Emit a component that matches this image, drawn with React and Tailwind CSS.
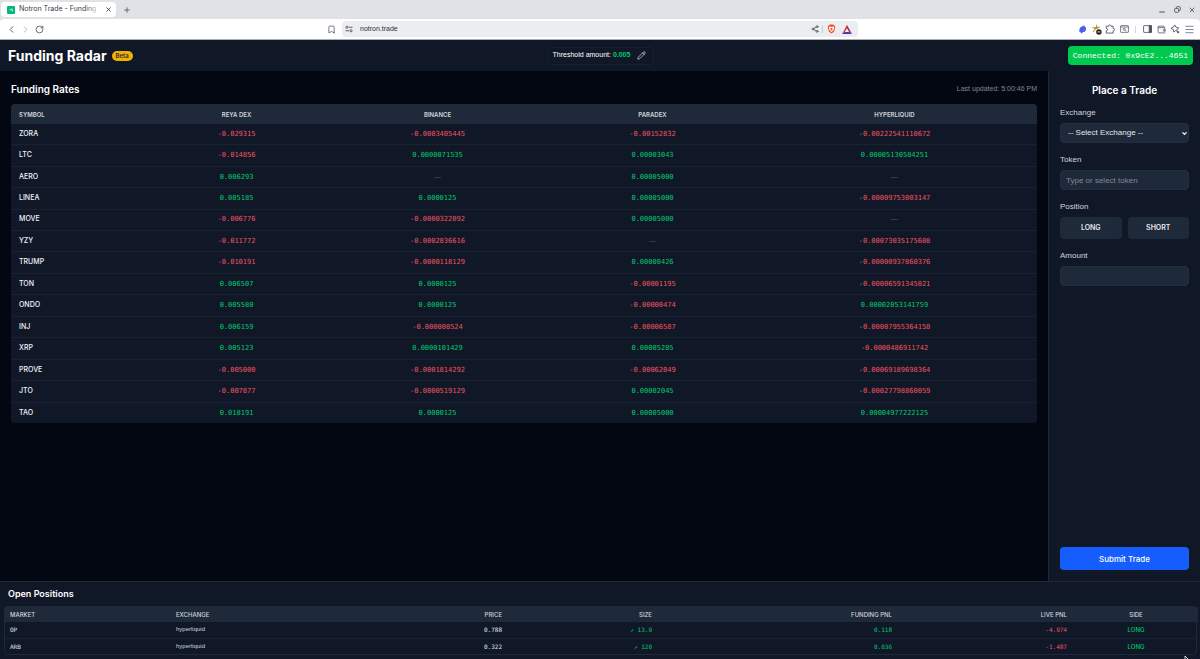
import React from "react";
import {
  Bookmark, ChevronDown, ChevronLeft, ChevronRight, Menu, Minus, Pencil, Plus,
  RotateCw, Share2, Wallet, X,
} from "lucide-react";

const RATES = [
  ["ZORA", "-0.029315", "-0.0003405445", "-0.00152832", "-0.00222541110672"],
  ["LTC", "-0.014856", "0.0000071535", "0.00003043", "0.00005130584251"],
  ["AERO", "0.006293", "—", "0.00005000", "—"],
  ["LINEA", "0.005185", "0.0000125", "0.00005000", "-0.00009753003147"],
  ["MOVE", "-0.006776", "-0.0000322092", "0.00005000", "—"],
  ["YZY", "-0.011772", "-0.0002836616", "—", "-0.00073035175608"],
  ["TRUMP", "-0.010191", "-0.0000118129", "0.00000426", "-0.00000937860376"],
  ["TON", "0.006507", "0.0000125", "-0.00001195", "-0.00006591345021"],
  ["ONDO", "0.005580", "0.0000125", "-0.00000474", "0.00002053141759"],
  ["INJ", "0.006159", "-0.000008524", "-0.00006587", "-0.00007955364158"],
  ["XRP", "0.005123", "0.0000101429", "0.00005285", "-0.0000486911742"],
  ["PROVE", "-0.005000", "-0.0001814292", "-0.00062049", "-0.00069189698364"],
  ["JTO", "-0.007877", "-0.0000519129", "0.00002045", "-0.00027798860059"],
  ["TAO", "0.018191", "0.0000125", "0.00005000", "0.00004977222125"],
];

const POSITIONS = [
  { market: "OP", exchange: "hyperliquid", price: "0.788", size: "13.9", funding: "0.118", live: "-4.974", side: "LONG" },
  { market: "ARB", exchange: "hyperliquid", price: "0.322", size: "120", funding: "0.036", live: "-1.487", side: "LONG" },
];

const MONO = "font-['DejaVu_Sans_Mono',monospace]";
const INTER = "font-['Inter',sans-serif]";

function toneOf(value) {
  if (value === "—") return "text-[#4a5565]";
  return value.startsWith("-") ? "text-[#f0525f]" : "text-[#05c86c]";
}

function IconButton({ label, children }) {
  return (
    <button type="button" aria-label={label} className="flex h-4 w-[14px] items-center justify-center">
      {children}
    </button>
  );
}

function TabStrip() {
  return (
    <div className="flex h-[19px] items-center justify-between bg-[#e1e2e7] pl-px pr-px">
      <div className="flex items-center gap-1">
        <div className="flex h-[15px] w-[115px] items-center gap-1 rounded bg-white pl-[6px] pr-1 text-[#3b3d45]">
          <svg viewBox="0 0 8 8" className="size-2 shrink-0">
            <rect width="8" height="8" rx="1" fill="#05b87a" />
            <path d="M2.5 3.2 4 4.6V3h1.4v2.6" fill="none" stroke="#b9f3dc" strokeWidth="0.8" />
          </svg>
          <span className={`relative flex-1 overflow-hidden whitespace-nowrap text-[7px] ${INTER}`}>
            Notron Trade - Funding
            <span className="absolute inset-y-0 right-0 w-4 bg-linear-to-r from-transparent to-white" />
          </span>
          <button type="button" aria-label="Close tab"><X className="size-[7px]" strokeWidth={3} /></button>
        </div>
        <button type="button" aria-label="New tab" className="flex w-[14px] justify-center text-[#55575f]">
          <Plus className="size-2" strokeWidth={2.5} />
        </button>
      </div>
      <div className="flex gap-px text-[#4c4e56]">
        <IconButton label="Minimize"><Minus className="mt-1 size-2" strokeWidth={3} /></IconButton>
        <IconButton label="Restore">
          <svg viewBox="0 0 16 16" className="size-[7px]" fill="none" stroke="currentColor" strokeWidth="2">
            <rect x="1.5" y="5.5" width="9" height="9" rx="2" />
            <path d="M5.5 5.500V3.500a2 2 0 0 1 2-2h5a2 2 0 0 1 2 2v5a2 2 0 0 1-2 2h-2" />
          </svg>
        </IconButton>
        <IconButton label="Close window"><X className="size-2" strokeWidth={2.5} /></IconButton>
      </div>
    </div>
  );
}

function Toolbar() {
  return (
    <div className="bg-[#e1e2e7]">
      <div className="flex h-[21px] items-center rounded-t border-b border-[#a9adb8] bg-white text-[#50535c]">
        <div className="flex flex-1 items-center justify-between px-1">
          <div className="flex">
            <IconButton label="Back"><ChevronLeft className="size-[11px]" strokeWidth={2} /></IconButton>
            <IconButton label="Forward"><ChevronRight className="size-[11px] text-[#b4b6bd]" strokeWidth={2} /></IconButton>
            <IconButton label="Reload"><RotateCw className="size-[9px]" strokeWidth={2.2} /></IconButton>
          </div>
          <IconButton label="Bookmark"><Bookmark className="size-[9px]" strokeWidth={2} /></IconButton>
        </div>
        <div className="flex h-4 w-[43%] items-center rounded bg-[#ecedf1] pr-1">
          <IconButton label="Site settings">
            <svg viewBox="0 0 16 16" className="size-[8px]" fill="none" stroke="currentColor" strokeWidth="1.8">
              <circle cx="4" cy="4.500" r="2.200" />
              <path d="M8 4.500h7M1 11.500h7" />
              <circle cx="12" cy="11.500" r="2.200" />
            </svg>
          </IconButton>
          <input aria-label="Address" defaultValue="notron.trade" className="min-w-0 flex-1 bg-transparent pl-1 text-[7px] text-[#2e3038] outline-none" />
          <IconButton label="Share"><Share2 className="size-2" strokeWidth={2.4} /></IconButton>
          <span className="h-[7px] w-px bg-[#c6c8cf]" />
          <div className="flex w-[31px] justify-between pl-px">
            <IconButton label="Shields">
              <svg viewBox="0 0 20 22" className="h-[10px] w-[9px]">
                <path d="M6 1h8l2 2 2.500 2-.8 2.500.5 1.500-2.700 8L10 21l-5.500-4L1.800 9l.5-1.500L1.500 5 4 3z" fill="#f4511e" />
                <path d="M5 5.500 10 6.500l5-1 1.200 3-2 4.500-4.200 5-4.200-5-2-4.500z" fill="#fff" />
                <path d="M7.500 8.500h5l-1 4.500L10 15l-1.500-2z" fill="#f4511e" />
              </svg>
            </IconButton>
            <IconButton label="Rewards">
              <svg viewBox="0 0 20 18" className="h-[9px] w-[10px]">
                <path d="M10 0 6.500 6.500 10 8z" fill="#ff4724" />
                <path d="M10 0 0 18l6-3.500L10 7z" fill="#e0433c" />
                <path d="M10 0v7l4 7.500 6 3.500z" fill="#9a2a80" />
                <path d="M0 18h20l-6-4H6z" fill="#5b2fa0" />
                <path d="m10 7.500 3.600 6.200H6.400z" fill="#fff" />
              </svg>
            </IconButton>
          </div>
        </div>
        <div className="flex flex-1 items-center justify-end px-1">
          <IconButton label="Wallet extension">
            <svg viewBox="0 0 16 16" className="size-[9px]">
              <path d="M8 2c2-2 4-1 4 1 2 0 3 2 2 4 1 1 0 3-1.500 3.500C12 13 10 13 9 12c-1 3-4 3-4.500.5C2 12.500 1 10 3 8c-1-3 2-5 5-6z" fill="#4f5df0" />
              <path d="M4 13c1 2 3 2 4 1" fill="none" stroke="#8b94ff" strokeWidth="1.500" />
            </svg>
          </IconButton>
          <IconButton label="Star extension">
            <svg viewBox="0 0 16 16" className="size-[11px]">
              <path d="M8 1v4M2 5l4 1M3 12l3-5M13 4 9 6" stroke="#c79a35" strokeWidth="1.500" />
              <path d="M5 5 9 3.500l2 2.500-5 2z" fill="#b08d3e" />
              <circle cx="11.500" cy="11.500" r="4" fill="#26262b" />
              <path d="M9.500 11.500h4" stroke="#fff" strokeWidth="1.200" />
            </svg>
          </IconButton>
          <IconButton label="Extensions">
            <svg viewBox="0 0 16 16" className="size-[10px]" fill="none" stroke="currentColor" strokeWidth="1.400" strokeLinejoin="round">
              <path d="M2 3.500h3.500a2 2 0 0 1 4 0H13V7a2 2 0 0 1 0 4v3.500H2V11a2 2 0 0 0 0-4z" />
            </svg>
          </IconButton>
          <IconButton label="Screenshot search">
            <svg viewBox="0 0 16 14" className="h-2 w-[9px]" fill="none" stroke="currentColor" strokeWidth="1.300">
              <rect x="1" y="1" width="14" height="12" rx="1" />
              <path d="M1 3.500h14" />
              <circle cx="7.500" cy="7.500" r="1.800" />
              <path d="m9 9 2.500 2.500" />
            </svg>
          </IconButton>
          <span className="mx-1 h-[7px] w-px bg-[#d7d8dd]" />
          <IconButton label="Side panel">
            <svg viewBox="0 0 16 14" className="h-2 w-[9px]" fill="none" stroke="currentColor" strokeWidth="1.500">
              <rect x="1" y="1" width="14" height="12" rx="1" />
              <path d="M11 1h4v12h-4z" fill="currentColor" />
            </svg>
          </IconButton>
          <IconButton label="Wallet"><Wallet className="size-[9px]" strokeWidth={2} /></IconButton>
          <IconButton label="Assistant">
            <svg viewBox="0 0 16 16" className="size-[10px]" fill="none" stroke="currentColor" strokeWidth="1.400" strokeLinejoin="round">
              <path d="M7.500 1.500 9.500 5l4.500 1.500-3 2 .5 3-3-1L6 13l-.5-4L1.500 7 5.500 5z" />
              <circle cx="13" cy="13" r="1.200" fill="currentColor" />
            </svg>
          </IconButton>
          <IconButton label="Menu"><Menu className="size-[11px] text-[#777a83]" strokeWidth={2} /></IconButton>
        </div>
      </div>
    </div>
  );
}

function Header() {
  return (
    <header className="flex h-[31px] items-center bg-[#101828] pl-2 pr-[7px]">
      <div className="flex flex-1 items-center gap-[5px]">
        <h1 className={`text-[14px] font-bold ${INTER}`}>Funding Radar</h1>
        <span className={`rounded-full bg-[#f0b100] px-1 py-[2px] text-[6px] leading-[6px] font-semibold text-[#1e2939] ${INTER}`}>Beta</span>
      </div>
      <div className="flex h-[18px] items-center gap-1 rounded-sm border border-[#162032] px-[5px] text-[7px]">
        <span className="text-white">Threshold amount: <span className="font-bold text-[#05c86c]">0.005</span></span>
        <IconButton label="Edit threshold"><Pencil className="size-[9px] text-[#d1d5dc]" strokeWidth={2} /></IconButton>
      </div>
      <div className="flex flex-1 justify-end">
        <button type="button" className="h-[19px] rounded-sm bg-[#00c950] px-[5px] font-['Liberation_Mono',monospace] text-[8px] text-white">
          Connected: 0x9cE2...4651
        </button>
      </div>
    </header>
  );
}

function FundingRates() {
  return (
    <main className="min-w-0 flex-1 px-[11px] py-[10px]">
      <div className="flex h-4 items-center justify-between">
        <h2 className={`text-[10px] font-semibold ${INTER}`}>Funding Rates</h2>
        <p className="text-[7px] text-[#7f8999]">Last updated: 5:00:46 PM</p>
      </div>
      <div className="mt-[7px] overflow-hidden rounded bg-[#101828]">
        <table className="h-[319px] w-full table-fixed">
          <colgroup>
            <col className="w-[140px]" />
            <col className="w-[171px]" />
            <col className="w-[231px]" />
            <col className="w-[199px]" />
            <col className="w-[285px]" />
          </colgroup>
          <thead className={`bg-[#1e2939] text-[6px] text-[#d1d5dc] ${INTER}`}>
            <tr className="h-5">
              <th className="pl-2 text-left font-semibold">SYMBOL</th>
              <th className="font-semibold">REYA DEX</th>
              <th className="font-semibold">BINANCE</th>
              <th className="font-semibold">PARADEX</th>
              <th className="font-semibold">HYPERLIQUID</th>
            </tr>
          </thead>
          <tbody>
            {RATES.map(([symbol, ...values]) => (
              <tr key={symbol} className="border-b border-[#182233] last:border-b-0">
                <th scope="row" className={`pl-2 text-left text-[7px] font-medium text-[#f3f4f6] ${INTER}`}>{symbol}</th>
                {values.map((value, i) => (
                  <td key={i} className={`text-center text-[7px] ${value === "—" ? "" : MONO} ${toneOf(value)}`}>{value}</td>
                ))}
              </tr>
            ))}
          </tbody>
        </table>
      </div>
    </main>
  );
}

function TradePanel() {
  const label = "block text-[8px] leading-[10px] text-[#d1d5dc]";
  const field = "block h-5 w-full rounded border border-[#232f40] bg-[#1e2939] text-[8px] outline-none";
  const side = `h-[22px] flex-1 rounded-sm bg-[#1e2939] text-[7px] font-semibold text-[#e5e7eb] ${INTER}`;
  return (
    <aside className="w-[152px] border-l border-[#1e2939] bg-[#101828]">
      <form className="flex h-full flex-col px-[11px] pt-[13px] pb-[11px]" onSubmit={(e) => e.preventDefault()}>
        <h2 className={`text-center text-[10px] leading-3 font-semibold ${INTER}`}>Place a Trade</h2>
        <div className="mt-3">
          <label htmlFor="exchange" className={label}>Exchange</label>
          <div className="relative mt-[5px]">
            <select id="exchange" className={`${field} appearance-none px-[7px] text-[#e5e7eb]`}>
              <option>-- Select Exchange --</option>
            </select>
            <ChevronDown className="pointer-events-none absolute top-[7px] right-px size-[7px]" strokeWidth={4} />
          </div>
        </div>
        <div className="mt-3">
          <label htmlFor="token" className={label}>Token</label>
          <input id="token" placeholder="Type or select token" className={`${field} mt-[5px] px-[5px] placeholder:text-[#7f8999]`} />
        </div>
        <div className="mt-3" role="group" aria-labelledby="position">
          <span id="position" className={label}>Position</span>
          <div className="mt-[5px] flex gap-[6px]">
            <button type="button" className={side}>LONG</button>
            <button type="button" className={side}>SHORT</button>
          </div>
        </div>
        <div className="mt-3">
          <label htmlFor="amount" className={label}>Amount</label>
          <input id="amount" className={`${field} mt-[5px] px-[5px]`} />
        </div>
        <button type="submit" className={`mt-auto h-[23px] rounded bg-[#155dfc] text-[8px] font-medium ${INTER}`}>Submit Trade</button>
      </form>
    </aside>
  );
}

function OpenPositions() {
  const num = `pr-[7px] text-right ${MONO}`;
  return (
    <section className="border-t border-[#1e2939] bg-[#101828] pt-1 pr-[3px] pb-1 pl-1">
      <h2 className={`pl-1 text-[9px] leading-4 font-semibold ${INTER}`}>Open Positions</h2>
      <div className="mt-1 rounded-sm border border-[#1e2939]">
        <table className={`w-full table-fixed text-[6px] ${INTER}`}>
          <colgroup>
            <col className="w-[166px]" />
            <col className="w-[200px]" />
            <col className="w-[138px]" />
            <col className="w-[150px]" />
            <col className="w-[240px]" />
            <col className="w-[175px]" />
            <col className="w-[124px]" />
          </colgroup>
          <thead className="bg-[#1e2939] text-[#d1d5dc]">
            <tr className="h-[15px]">
              <th className="pl-[5px] text-left font-medium">MARKET</th>
              <th className="pl-[5px] text-left font-medium">EXCHANGE</th>
              <th className="pr-[7px] text-right font-medium">PRICE</th>
              <th className="pr-[7px] text-right font-medium">SIZE</th>
              <th className="pr-[7px] text-right font-medium">FUNDING PNL</th>
              <th className="pr-[7px] text-right font-medium">LIVE PNL</th>
              <th className="font-medium">SIDE</th>
            </tr>
          </thead>
          <tbody>
            {POSITIONS.map((p) => (
              <tr key={p.market} className="h-4 border-b border-[#182233] last:border-b-0">
                <td className={`pl-[5px] text-[#e5e7eb] ${MONO}`}>{p.market}</td>
                <td className="pl-[5px] font-['Liberation_Sans',sans-serif] text-[#d1d5dc]">{p.exchange}</td>
                <td className={`${num} text-[#e5e7eb]`}>{p.price}</td>
                <td className={`${num} ${toneOf(p.size)}`}>↗ {p.size}</td>
                <td className={`${num} ${toneOf(p.funding)}`}>{p.funding}</td>
                <td className={`${num} ${toneOf(p.live)}`}>{p.live}</td>
                <td className="text-center font-medium text-[#05c86c]">{p.side}</td>
              </tr>
            ))}
          </tbody>
        </table>
      </div>
    </section>
  );
}

export default function App() {
  return (
    <div className="relative flex min-h-screen flex-col overflow-hidden bg-[#030712] font-['Liberation_Sans',Arial,sans-serif] text-white">
      <TabStrip />
      <Toolbar />
      <Header />
      <div className="flex flex-1">
        <FundingRates />
        <TradePanel />
      </div>
      <OpenPositions />
      <svg viewBox="0 0 8 10" className="pointer-events-none absolute right-2 -bottom-[6px] h-[10px] w-2">
        <path d="M1 1v8l2-2h4z" fill="#101828" stroke="#e5e7eb" strokeWidth="0.900" />
      </svg>
    </div>
  );
}
